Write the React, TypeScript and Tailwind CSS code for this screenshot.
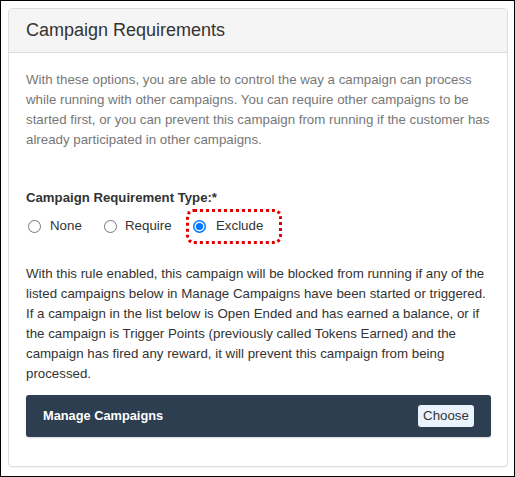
import React from "react";

function Radio({ checked }: { checked?: boolean }) {
  return checked ? (
    <svg width="13" height="13" viewBox="0 0 13 13" className="shrink-0">
      <circle cx="6.5" cy="6.5" r="5.75" fill="white" stroke="#0075ff" strokeWidth="1.5" />
      <circle cx="6.5" cy="6.5" r="3.6" fill="#0075ff" />
    </svg>
  ) : (
    <svg width="13" height="13" viewBox="0 0 13 13" className="shrink-0">
      <circle cx="6.5" cy="6.5" r="6" fill="white" stroke="#767676" strokeWidth="1" />
    </svg>
  );
}

export default function App() {
  return (
    <div
      className="w-[515px] h-[477px] border border-black bg-white pl-[7px] pr-[6px] py-[7px]"
      style={{ fontFamily: '"Liberation Sans", Arial, sans-serif' }}
    >
      <div className="h-[459px] border border-[#dddddd] rounded-[4px] bg-white shadow-[0_1px_1px_rgba(0,0,0,0.05)] overflow-hidden">
        <div className="h-[44px] bg-[#f5f5f5] border-b border-[#dddddd] px-[17px] flex items-center text-[18px] text-[#333333]">
          Campaign Requirements
        </div>
        <div className="pl-[17px] pr-[16px] pt-[17px]">
          <p className="text-[13.3px] leading-[20px] text-[#777777]">
            With these options, you are able to control the way a campaign can process while running with other
            campaigns. You can require other campaigns to be started first, or you can prevent this campaign from
            running if the customer has already participated in other campaigns.
          </p>
          <div className="mt-[38px] text-[13.2px] leading-[20px] font-bold text-[#333333]">
            Campaign Requirement Type:*
          </div>
          <div className="mt-[8px] flex items-center h-[20px] text-[13.3px] text-[#333333]">
            <label className="flex items-center ml-[2px] w-[76px]">
              <Radio />
              <span className="ml-[9px]">None</span>
            </label>
            <label className="flex items-center w-[89px]">
              <Radio />
              <span className="ml-[8px]">Require</span>
            </label>
            <label className="relative flex items-center">
              <Radio checked />
              <span className="ml-[10px]">Exclude</span>
              <span className="absolute left-[-7px] top-[-7px] w-[96px] h-[35px] border-[3px] border-dotted border-[#e00000] rounded-[8px] pointer-events-none" />
            </label>
          </div>
          <p className="mt-[28px] text-[13.3px] leading-[20px] text-[#333333]">
            With this rule enabled, this campaign will be blocked from running if any of the listed campaigns below
            in Manage Campaigns have been started or triggered. If a campaign in the list below is Open Ended and has
            earned a balance, or if the campaign is Trigger Points (previously called Tokens Earned) and the campaign
            has fired any reward, it will prevent this campaign from being processed.
          </p>
          <div className="mt-[11px] h-[42px] bg-[#2c3e50] rounded-[3px] shadow-[0_1px_2px_rgba(0,0,0,0.15)] flex items-center justify-between pl-[17px] pr-[17px]">
            <span className="text-[12.8px] font-bold text-white">Manage Campaigns</span>
            <button className="h-[22px] w-[56px] bg-[#eaf3fb] rounded-[3px] text-[13.3px] text-[#333333] leading-[22px]">
              Choose
            </button>
          </div>
        </div>
      </div>
    </div>
  );
}
